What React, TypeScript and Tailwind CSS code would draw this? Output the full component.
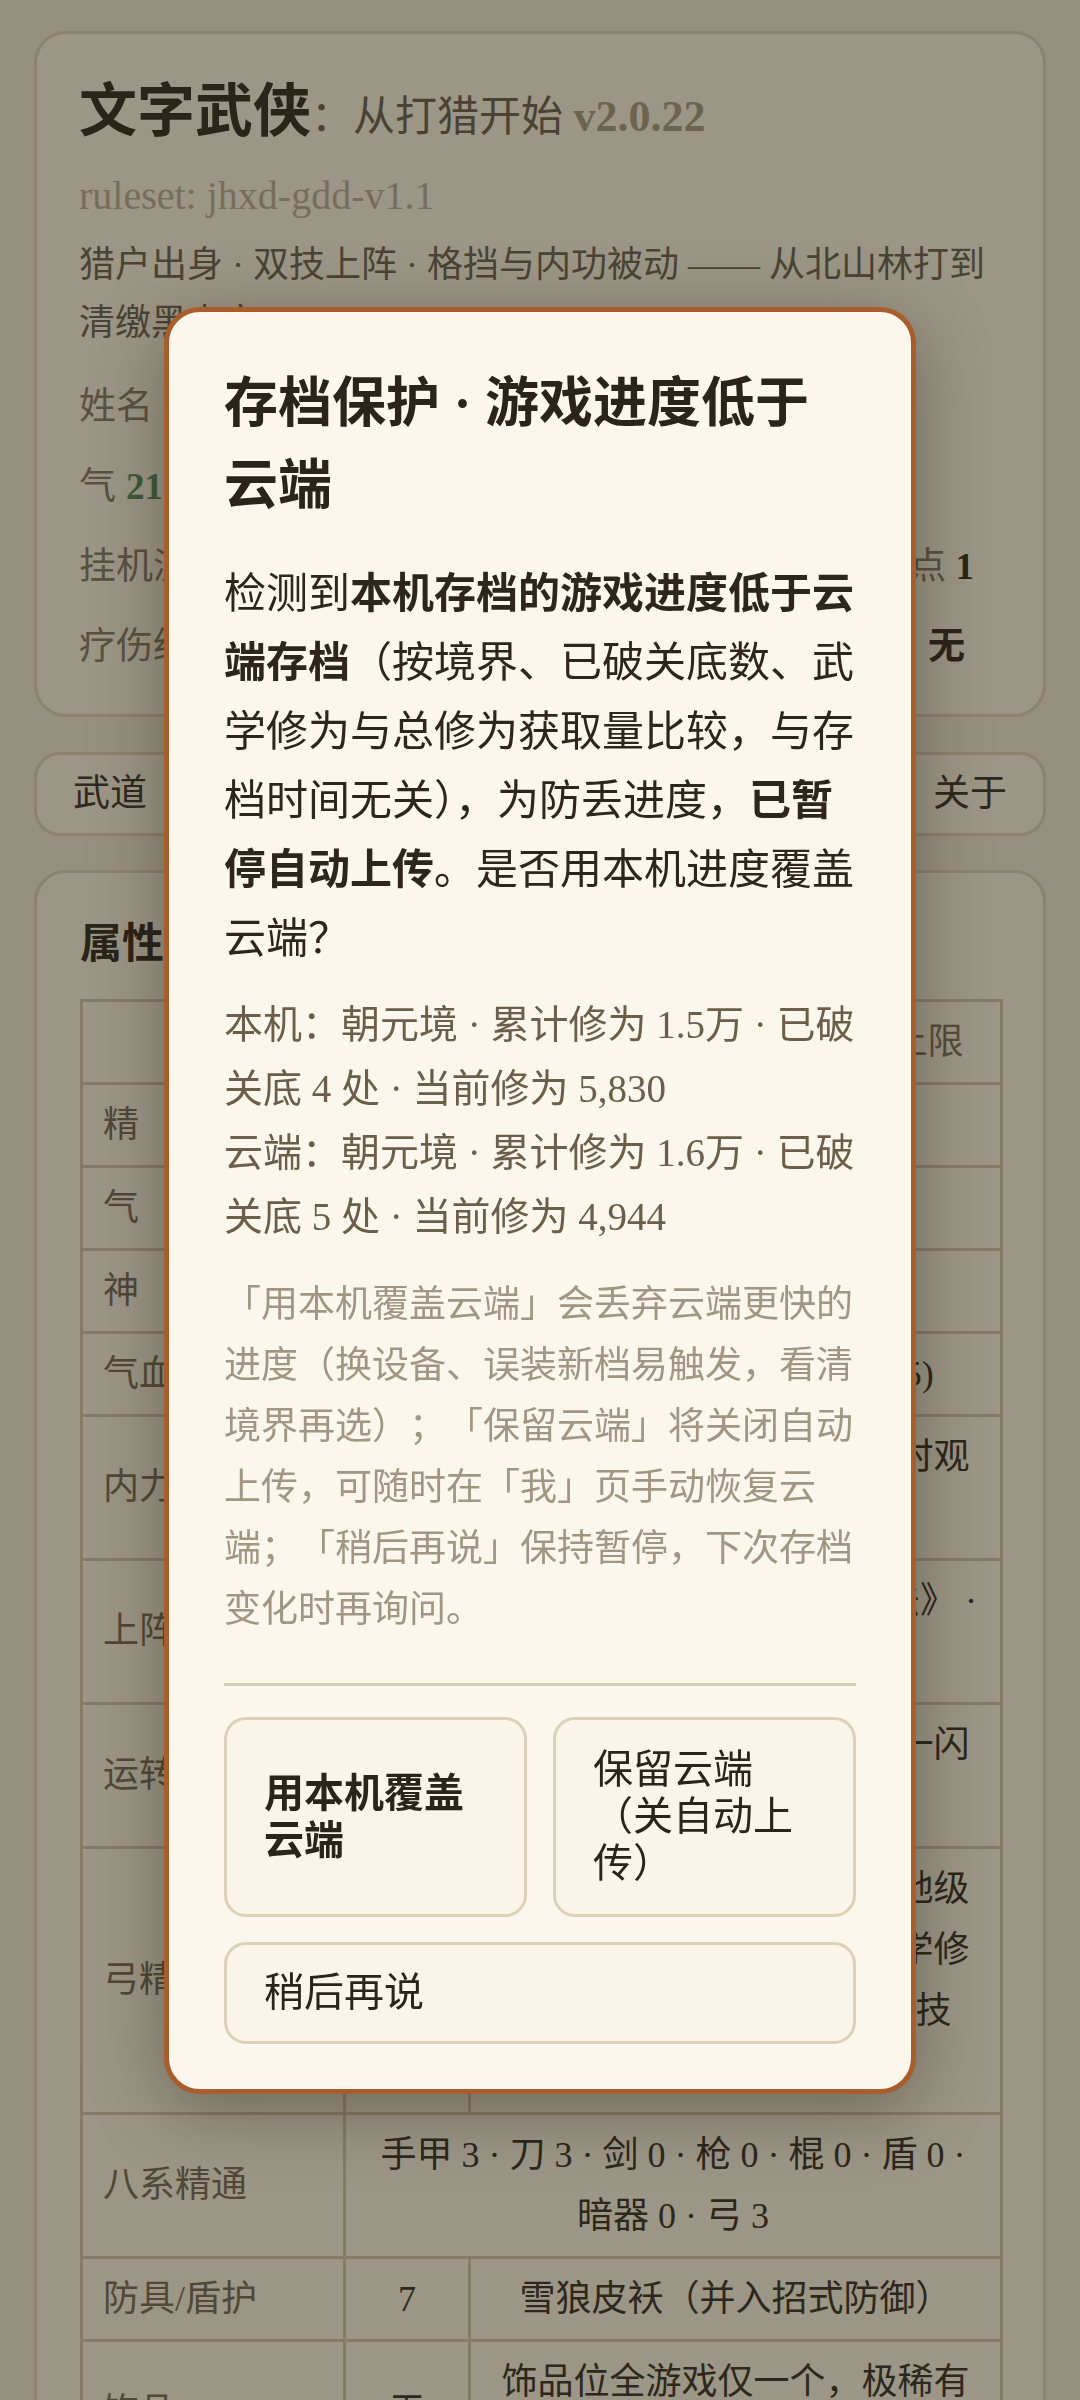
import React from "react";

const tabs = ["武道", "行囊", "江湖", "功法", "我", "关于"];

type Row = { label: string; value?: string; desc: string; span?: boolean };

const rows: Row[] = [
  { label: "精", value: "62", desc: "体魄之本 · 上限 80" },
  { label: "气", value: "218", desc: "内息之源 · 上限 240" },
  { label: "神", value: "96", desc: "心神之主 · 上限 120" },
  { label: "气血", value: "1,986", desc: "上限 1,986 / 12,240 (+125)" },
  { label: "内力", value: "480", desc: "运转周天，每次打坐疗伤时观想经脉，回复加倍" },
  { label: "上阵", value: "2", desc: "《猎户弓术》 · 《山林刀法》 · 《铁布衫》" },
  { label: "运转", value: "1", desc: "刀法第三式，寒光乍现电一闪必中要害" },
  {
    label: "弓精",
    value: "3",
    desc: "弓术精熟可开三石强弓，地级功法加成翻倍，猎杀得武学修为加成，远程优先触发抗技（需上阵弓）",
  },
  { label: "八系精通", desc: "手甲 3 · 刀 3 · 剑 0 · 枪 0 · 棍 0 · 盾 0 · 暗器 0 · 弓 3", span: true },
  { label: "防具/盾护", value: "7", desc: "雪狼皮袄（并入招式防御）" },
  { label: "饰品", value: "无", desc: "饰品位全游戏仅一个，极稀有（尚未获得）" },
];

export default function App() {
  return (
    <div className="relative h-[2400px] w-[1080px] overflow-hidden bg-[#96907f] px-[34px] pt-[31px] font-['Liberation_Serif','Noto_Sans_CJK_SC',serif] text-[#2b2418]">
      {/* Top card */}
      <div className="rounded-[32px] border-[3px] border-[#8b836e] bg-[#9c9686] px-[42px] pb-[37px] pt-[40px]">
        <h1 className="leading-[76px]">
          <span className="text-[58px] font-bold text-[#2b2418]">文字武侠</span>
          <span className="text-[42px] text-[#4a4233]">：从打猎开始 </span>
          <span className="text-[44px] font-bold text-[#6c6350]">v2.0.22</span>
        </h1>
        <div className="mt-[3px] text-[40px] leading-[58px] text-[#776d5a]">ruleset: jhxd-gdd-v1.1</div>
        <p className="mt-[11px] text-[36px] leading-[58px] text-[#4b4334]">
          猎户出身 · 双技上阵 · 格挡与内功被动 —— 从北山林打到清缴黑虎寨
        </p>
        <div className="mt-[24px] flex flex-col gap-[19px] text-[37px] leading-[61px] text-[#5a5141]">
          <div className="flex">
            <span>姓名</span>
            <span className="ml-[12px] text-[#2b2418]">林小七</span>
          </div>
          <div className="flex">
            <span>气</span>
            <span className="ml-[10px] font-bold text-[#3e5a3c]">218</span>
            <span className="ml-[6px] text-[#2b2418]">/ 240</span>
          </div>
          <div className="flex justify-between">
            <span>挂机派遣 北山林</span>
            <span className="mr-[27px]">
              潜能点 <span className="font-bold text-[#2b2418]">1</span>
            </span>
          </div>
          <div className="flex justify-between">
            <span>疗伤经脉 未受伤</span>
            <span className="mr-[36px]">
              暗伤：<span className="font-bold text-[#2b2418]">无</span>
            </span>
          </div>
        </div>
      </div>

      {/* Nav */}
      <div className="mt-[35px] flex h-[84px] items-center justify-between rounded-[26px] border-[3px] border-[#8b836e] bg-[#9c9686] px-[36px] text-[37px] text-[#2f291f]">
        {tabs.map((t) => (
          <span key={t}>{t}</span>
        ))}
      </div>

      {/* Attribute card */}
      <div className="mt-[34px] rounded-[32px] border-[3px] border-[#8b836e] bg-[#9c9686] px-[43px] pb-[40px] pt-[41px]">
        <h2 className="text-[42px] font-bold leading-[60px] text-[#2b2418]">属性</h2>
        <table className="mt-[25px] w-full table-fixed border-collapse text-[36px] leading-[61px]">
          <colgroup>
            <col className="w-[263px]" />
            <col className="w-[125px]" />
            <col className="w-[532px]" />
          </colgroup>
          <thead>
            <tr className="text-[#554c3c]">
              <th className="border-[3px] border-[#857c68] px-[20px] py-[9.5px] font-normal">属性</th>
              <th className="border-[3px] border-[#857c68] px-[10px] py-[9.5px] font-normal">值</th>
              <th className="border-[3px] border-[#857c68] px-[20px] py-[9.5px] font-normal">
                基础值 · 装备加成 · 境界上限
              </th>
            </tr>
          </thead>
          <tbody>
            {rows.map((r) => (
              <tr key={r.label}>
                <td className="border-[3px] border-[#857c68] px-[20px] py-[9.5px] text-left text-[#514838]">{r.label}</td>
                {r.span ? (
                  <td colSpan={2} className="border-[3px] border-[#857c68] px-[20px] py-[9.5px] text-center text-[#2d271c]">
                    {r.desc}
                  </td>
                ) : (
                  <>
                    <td className="border-[3px] border-[#857c68] px-[10px] py-[9.5px] text-center text-[#2d271c]">{r.value}</td>
                    <td className="border-[3px] border-[#857c68] px-[20px] py-[9.5px] text-center text-[#2d271c]">{r.desc}</td>
                  </>
                )}
              </tr>
            ))}
          </tbody>
        </table>
      </div>

      {/* Modal overlay */}
      <div className="fixed inset-0 flex items-center justify-center">
        <div className="w-[752px] rounded-[36px] border-[5px] border-[#a85d2d] bg-[#fcf7ec] px-[55px] pb-[45px] pt-[51px] shadow-[0_16px_70px_rgba(30,20,5,0.35)]">
          <h2 className="text-[54px] font-bold leading-[82px] text-[#2b2419]">
            存档保护 · 游戏进度低于
            <br />
            云端
          </h2>
          <p className="mt-[33px] text-[42px] leading-[69px] text-[#2e261a]">
            检测到<span className="font-bold">本机存档的游戏进度低于云端存档</span>
            （按境界、已破关底数、武学修为与总修为获取量比较，与存档时间无关），为防丢进度，
            <span className="font-bold">已暂停自动上传</span>。是否用本机进度覆盖云端？
          </p>
          <div className="mt-[19px] text-[39px] leading-[64px] text-[#6b5f4b]">
            <div>本机：朝元境 · 累计修为 1.5万 · 已破关底 4 处 · 当前修为 5,830</div>
            <div>云端：朝元境 · 累计修为 1.6万 · 已破关底 5 处 · 当前修为 4,944</div>
          </div>
          <p className="mt-[25px] text-[37px] leading-[61px] text-[#a09683] [text-spacing-trim:space-all]">
            「用本机覆盖云端」会丢弃云端更快的进度（换设备、误装新档易触发，看清境界再选）；「保留云端」将关闭自动上传，可随时在「我」页手动恢复云端；「稍后再说」保持暂停，下次存档变化时再询问。
          </p>
          <div className="mt-[43px] h-[3px] bg-[#d8cdb6]" />
          <div className="mt-[31px] grid grid-cols-2 gap-[26px]">
            <button className="flex h-[200px] items-center rounded-[22px] border-[3px] border-[#dcd1b6] bg-[#fbf5e9] px-[37px] text-left text-[40px] font-bold leading-[47px] text-[#2b2419]">
              用本机覆盖云端
            </button>
            <button className="flex h-[200px] items-center rounded-[22px] border-[3px] border-[#dcd1b6] bg-[#fbf5e9] px-[37px] text-left text-[40px] leading-[47px] text-[#2b2419]">
              保留云端（关自动上传）
            </button>
          </div>
          <button className="mt-[25px] flex h-[102px] w-full items-center rounded-[22px] border-[3px] border-[#dcd1b6] bg-[#fbf5e9] px-[37px] text-left text-[40px] leading-[47px] text-[#2b2419]">
            稍后再说
          </button>
        </div>
      </div>
    </div>
  );
}
